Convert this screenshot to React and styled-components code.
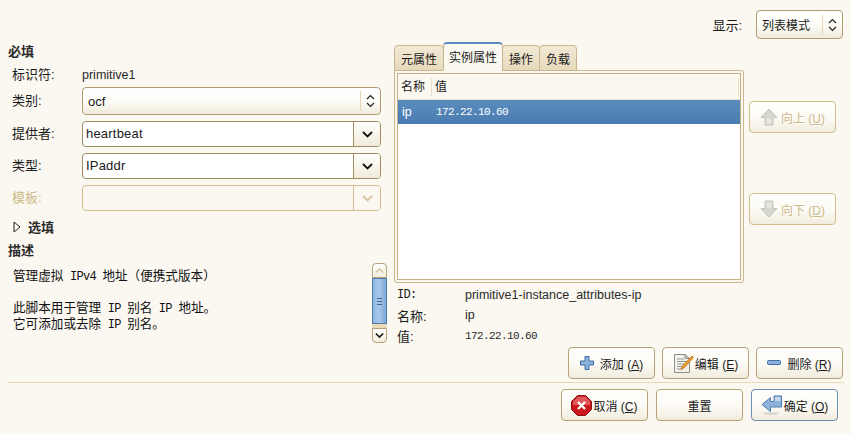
import React from 'react';
import styled, { createGlobalStyle } from 'styled-components';

const FONT = '"Liberation Sans", "Noto Sans CJK SC", sans-serif';
const MONO = '"Liberation Mono", "Noto Sans CJK SC", monospace';

const GlobalStyle = createGlobalStyle`
  html, body { margin: 0; padding: 0; background: #fbf8f1; }
  body { font-family: ${FONT}; font-size: 12px; color: #1a1a1a; }
`;

const Page = styled.div`
  width: 851px;
  height: 434px;
  box-sizing: border-box;
  padding: 10px 8px 0;
  overflow: hidden;
  background: #fbf8f1;
`;

const TopBar = styled.div`
  display: flex;
  justify-content: flex-end;
  align-items: center;
  gap: 14px;
  height: 29px;
  margin-bottom: 3px;
`;

const TopLabel = styled.span`
  font-size: 13px;
`;

const Main = styled.div`
  display: flex;
  gap: 7px;
`;

const LeftColumn = styled.div`
  width: 379px;
  padding-top: 3px;
`;

const Heading = styled.div`
  font-weight: 700;
  font-size: 13px;
  line-height: 14px;
  color: #2a2a2a;
`;

const FieldGrid = styled.div`
  display: grid;
  grid-template-columns: 70px 299px;
  row-gap: 6px;
  padding: 10px 6px 0 4px;
  align-items: center;
`;

const FieldLabel = styled.div`
  font-size: 13px;
  line-height: 12px;
  color: ${(p) => (p.$disabled ? '#cdb888' : '#1a1a1a')};
`;

const PlainValue = styled.div`
  font-size: 12.5px;
  line-height: 12px;
  color: #2a2a2a;
`;

const ComboBox = styled.div`
  display: flex;
  align-items: center;
  box-sizing: border-box;
  width: ${(p) => p.$width || '299px'};
  height: ${(p) => p.$height || '28px'};
  border: 1px solid #b09c70;
  border-radius: 4px;
  background: linear-gradient(#ffffff 0%, #fdfcf8 50%, #f0ebdb 100%);
`;

const ComboText = styled.span`
  flex: 1;
  padding-left: 5px;
  font-size: ${(p) => p.$size || '13px'};
`;

const ComboDivider = styled.span`
  width: 1px;
  height: 20px;
  background: #e6d6b2;
`;

const ComboArrow = styled.span`
  display: flex;
  justify-content: center;
  width: 19px;
`;

const EntryBox = styled.div`
  display: flex;
  box-sizing: border-box;
  width: 299px;
  height: 26px;
  border: 1px solid ${(p) => (p.$disabled ? '#d2bd8c' : '#a08c60')};
  border-radius: 4px;
  overflow: hidden;
  background: ${(p) => (p.$disabled ? '#fbf8f1' : '#fff')};
`;

const EntryText = styled.span`
  flex: 1;
  padding-left: 3px;
  font-size: 13px;
  letter-spacing: 0.2px;
  line-height: 24px;
  color: #1a1a1a;
`;

const EntryButton = styled.span`
  display: flex;
  align-items: center;
  justify-content: center;
  width: 26px;
  border-left: 1px solid ${(p) => (p.$disabled ? '#d2bd8c' : '#a08c60')};
  background: ${(p) => (p.$disabled ? '#fbf8f1' : 'linear-gradient(#fffefb, #f0ebdb)')};
`;

const Expander = styled.div`
  display: flex;
  align-items: center;
  gap: 7px;
  height: 13px;
  margin: 9px 0 11px 5px;
  font-weight: 700;
  font-size: 13px;
  color: #2a2a2a;
`;

const DescRow = styled.div`
  display: flex;
  justify-content: space-between;
  height: 80px;
  margin-top: 5px;
`;

const DescText = styled.div`
  padding: 5px 0 0 5px;
`;

const DescLine = styled.div`
  height: 16px;
  font-family: ${FONT};
  font-size: 12.6px;
  line-height: 16px;
  white-space: pre;
  color: #111;
`;

const Latin = styled.span`
  font-family: "Liberation Mono", monospace;
  font-size: 12px;
  letter-spacing: -0.7px;
`;

const ScrollBar = styled.div`
  display: flex;
  flex-direction: column;
  width: 15px;
  height: 80px;
`;

const ScrollStep = styled.div`
  display: flex;
  align-items: center;
  justify-content: center;
  box-sizing: border-box;
  height: 15px;
  border: 1px solid #b5a278;
  border-radius: ${(p) => (p.$down ? '0 0 4px 4px' : '4px 4px 0 0')};
  background: linear-gradient(#fff, #f1ecdd);
`;

const ScrollTrack = styled.div`
  flex: 1;
  display: flex;
  flex-direction: column;
  background: #e9d9b4;
`;

const ScrollThumb = styled.div`
  display: flex;
  align-items: center;
  justify-content: center;
  box-sizing: border-box;
  height: 46px;
  border: 1px solid #4f7cae;
  background: linear-gradient(90deg, #8fb6e2, #a9c8ea 45%, #7ea7d6);
`;

const RightColumn = styled.div`
  width: 449px;
`;

const RightTop = styled.div`
  display: flex;
  gap: 5px;
`;

const TabColumn = styled.div`
  width: 350px;
`;

const TabStrip = styled.div`
  display: flex;
  align-items: flex-end;
  height: 29px;
  margin-bottom: -1px;
  position: relative;
  z-index: 1;
`;

const Tab = styled.div`
  box-sizing: border-box;
  height: ${(p) => (p.$active ? '29px' : '26px')};
  padding: ${(p) => (p.$active ? '4px 5px 0' : '4px 6px 0')};
  font-size: 12px;
  line-height: 20px;
  white-space: nowrap;
  border: 1px solid #c9b68c;
  border-radius: 4px 4px 0 0;
  background: ${(p) => (p.$active ? '#fbf8f1' : 'linear-gradient(#f3ead6, #e6d9bb)')};
  border-top-color: ${(p) => (p.$active ? '#5b8cc0' : '#c9b68c')};
  border-top-width: ${(p) => (p.$active ? '2px' : '1px')};
  border-bottom: ${(p) => (p.$active ? '1px solid #fbf8f1' : '1px solid #c9b68c')};

  & + & {
    margin-left: -1px;
  }
`;

const Notebook = styled.div`
  box-sizing: border-box;
  height: 213px;
  padding: 2px;
  border: 1px solid #c9b68c;
  border-radius: 0 3px 3px 3px;
`;

const ListBox = styled.div`
  box-sizing: border-box;
  height: 100%;
  border: 1px solid #c4b084;
  background: #fff;
`;

const ListHeader = styled.div`
  display: flex;
  align-items: center;
  height: 26px;
  box-sizing: border-box;
  border-bottom: 1px solid #e9dfc8;
  background: #fbf8f1;
`;

const HeaderCell = styled.div`
  box-sizing: border-box;
  width: ${(p) => p.$width};
  height: 18px;
  padding-left: 3px;
  font-size: 12px;
  line-height: 18px;
  border-right: 1px solid #eadfc6;
`;

const SelectedRow = styled.div`
  display: flex;
  align-items: center;
  height: 24px;
  background: linear-gradient(#5a8cc0, #4a7cb0);
  color: #fff;
`;

const RowName = styled.span`
  width: 34px;
  padding-left: 4px;
  font-size: 12.5px;
`;

const MonoValue = styled.span`
  font-family: ${MONO};
  font-size: 11px;
  letter-spacing: -0.6px;
  line-height: 12px;
`;

const SideButtons = styled.div`
  display: flex;
  flex-direction: column;
  gap: 60px;
  padding-top: 59px;
`;

const Button = styled.div`
  display: flex;
  align-items: center;
  justify-content: center;
  gap: ${(p) => p.$gap || '3px'};
  box-sizing: border-box;
  width: 87px;
  height: 32px;
  font-size: 12px;
  white-space: nowrap;
  border: 1px solid ${(p) => (p.$default ? '#6b8db4' : p.$disabled ? '#d2bd8c' : '#b5a278')};
  border-radius: 4px;
  background: linear-gradient(#fffefc 0%, #fdfbf6 50%, #f1ecdd 100%);
  color: ${(p) => (p.$disabled ? '#cdb888' : '#1a1a1a')};
  text-shadow: ${(p) => (p.$disabled ? '1px 1px 0 #fff' : 'none')};

  u {
    text-underline-offset: 1px;
  }
`;

const InfoGrid = styled.div`
  display: grid;
  grid-template-columns: 68px 1fr;
  grid-auto-rows: 20px;
  align-items: center;
  padding: 2px 0 0 3px;
`;

const InfoLabel = styled.div`
  font-size: ${(p) => (p.$mono ? '12px' : '13px')};
  letter-spacing: ${(p) => (p.$mono ? '-0.7px' : '0')};
  font-family: ${(p) => (p.$mono ? MONO : FONT)};
`;

const InfoValue = styled.div`
  font-size: 12.5px;
  color: #2a2a2a;
`;

const ActionRow = styled.div`
  display: flex;
  justify-content: flex-end;
  gap: 7px;
  margin-top: 2px;
`;

const Separator = styled.div`
  height: 1px;
  margin: 3px -1px 6px -1px;
  background: #e8d8b6;
`;

const FooterRow = styled.div`
  display: flex;
  justify-content: flex-end;
  gap: 8px;
  padding-right: 5px;
`;

const UpDownArrows = () => (
  <svg width="11" height="16" viewBox="0 0 11 16" fill="none" stroke="#222" strokeWidth="1.2">
    <path d="M2 6 L5.5 2.5 L9 6" />
    <path d="M2 10 L5.5 13.5 L9 10" />
  </svg>
);

const Chevron = ({ color = '#111', width = 11, up }) => (
  <svg width={width} height="7" viewBox="0 0 11 7" fill="none" stroke={color} strokeWidth="1.8">
    <path d={up ? 'M1 6 L5.5 1.5 L10 6' : 'M1 1 L5.5 5.5 L10 1'} />
  </svg>
);

const TriangleRight = () => (
  <svg width="8" height="12" viewBox="0 0 8 12" fill="#fbf8f1" stroke="#222" strokeWidth="1">
    <path d="M1 1 L7 6 L1 11 Z" />
  </svg>
);

const GripLines = () => (
  <svg width="7" height="8" viewBox="0 0 7 8" stroke="#3f6796" strokeWidth="1">
    <path d="M1 1.5 H6 M1 4.5 H6 M1 7.5 H6" />
  </svg>
);

const UpArrowIcon = () => (
  <svg width="18" height="18" viewBox="0 0 18 18">
    <path d="M9 1 L17 9.5 H13 V17 H5 V9.5 H1 Z" fill="#d6d8cf" stroke="#c4c6bc" />
    <path d="M6.5 10 V16 H11.5 V10" fill="#e4e5dd" />
  </svg>
);

const DownArrowIcon = () => (
  <svg width="18" height="18" viewBox="0 0 18 18">
    <path d="M5 1 H13 V8.5 H17 L9 17 L1 8.5 H5 Z" fill="#d6d8cf" stroke="#c4c6bc" />
    <path d="M6.5 2 V8 H11.5 V2" fill="#e4e5dd" />
  </svg>
);

const PlusIcon = () => (
  <svg width="14" height="14" viewBox="0 0 14 14">
    <path d="M5 .5 H9 V5 H13.5 V9 H9 V13.5 H5 V9 H.5 V5 H5 Z" fill="#8db1dc" stroke="#3e6ea6" />
  </svg>
);

const MinusIcon = () => (
  <svg width="14" height="6" viewBox="0 0 14 6">
    <rect x=".5" y=".5" width="13" height="4" rx="1" fill="#8db1dc" stroke="#3e6ea6" />
  </svg>
);

const EditIcon = () => (
  <svg width="21" height="22" viewBox="0 0 21 22">
    <path d="M1.5 2.5 H12 L16.5 6.5 V20.5 H1.5 Z" fill="#f2f1ec" stroke="#8f8f88" />
    <path d="M12 2.5 V6.5 H16.5 Z" fill="#d5d4cc" stroke="#8f8f88" />
    <path d="M4 7 H11 M4 9.5 H14 M4 12 H11 M4 14.5 H9 M4 17 H8" stroke="#9a9a92" strokeWidth="1" />
    <path d="M19 4 L20.5 5.5 L11 16 L8 17.5 L9 14.5 Z" fill="#f0a030" stroke="#b86c10" strokeWidth=".8" />
  </svg>
);

const StopIcon = () => (
  <svg width="21" height="21" viewBox="0 0 21 21">
    <path d="M6.5 .5 H14.5 L20.5 6.5 V14.5 L14.5 20.5 H6.5 L.5 14.5 V6.5 Z" fill="#c9161c" stroke="#8e1014" />
    <path d="M6.8 1.8 H14.2 L19 6.6 V10 H2 V6.6 Z" fill="#e0585a" />
    <path d="M7 7 L14 14 M14 7 L7 14" stroke="#fff" strokeWidth="2.4" />
  </svg>
);

const ReturnIcon = () => (
  <svg width="22" height="21" viewBox="0 0 22 21">
    <ellipse cx="10" cy="18.5" rx="8" ry="1.6" fill="#dcdad2" />
    <path d="M13 1 H20.5 V12 H9.5 V16.5 L1 9.5 L9.5 2.5 V6.5 H13 Z" fill="#8fb2da" stroke="#4f7cae" />
    <path d="M14 2 H19.5 V6 H14 Z" fill="#c5d8ee" />
  </svg>
);

const Mnemonic = ({ label, k }) => (
  <span>
    {label} (<u>{k}</u>)
  </span>
);

export default function App() {
  return (
    <Page>
      <GlobalStyle />
      <TopBar>
        <TopLabel>显示:</TopLabel>
        <ComboBox $width="87px" $height="29px">
          <ComboText $size="12px">列表模式</ComboText>
          <ComboDivider />
          <ComboArrow><UpDownArrows /></ComboArrow>
        </ComboBox>
      </TopBar>

      <Main>
        <LeftColumn>
          <Heading>必填</Heading>
          <FieldGrid>
            <FieldLabel>标识符:</FieldLabel>
            <PlainValue>primitive1</PlainValue>
            <FieldLabel>类别:</FieldLabel>
            <ComboBox>
              <ComboText>ocf</ComboText>
              <ComboDivider />
              <ComboArrow><UpDownArrows /></ComboArrow>
            </ComboBox>
            <FieldLabel>提供者:</FieldLabel>
            <EntryBox>
              <EntryText>heartbeat</EntryText>
              <EntryButton><Chevron /></EntryButton>
            </EntryBox>
            <FieldLabel>类型:</FieldLabel>
            <EntryBox>
              <EntryText>IPaddr</EntryText>
              <EntryButton><Chevron /></EntryButton>
            </EntryBox>
            <FieldLabel $disabled>模板:</FieldLabel>
            <EntryBox $disabled>
              <EntryText />
              <EntryButton $disabled><Chevron color="#d8c69c" /></EntryButton>
            </EntryBox>
          </FieldGrid>
          <Expander>
            <TriangleRight />
            选填
          </Expander>
          <Heading>描述</Heading>
          <DescRow>
            <DescText>
              <DescLine>管理虚拟<Latin> IPv4 </Latin>地址（便携式版本）</DescLine>
              <DescLine />
              <DescLine>此脚本用于管理<Latin> IP </Latin>别名<Latin> IP </Latin>地址。</DescLine>
              <DescLine>它可添加或去除<Latin> IP </Latin>别名。</DescLine>
            </DescText>
            <ScrollBar>
              <ScrollStep><Chevron color="#d8c69c" width={9} up /></ScrollStep>
              <ScrollTrack>
                <ScrollThumb><GripLines /></ScrollThumb>
              </ScrollTrack>
              <ScrollStep $down><Chevron width={9} /></ScrollStep>
            </ScrollBar>
          </DescRow>
        </LeftColumn>

        <RightColumn>
          <RightTop>
            <TabColumn>
              <TabStrip>
                <Tab>元属性</Tab>
                <Tab $active>实例属性</Tab>
                <Tab>操作</Tab>
                <Tab>负载</Tab>
              </TabStrip>
              <Notebook>
                <ListBox>
                  <ListHeader>
                    <HeaderCell $width="34px">名称</HeaderCell>
                    <HeaderCell $width="307px">值</HeaderCell>
                  </ListHeader>
                  <SelectedRow>
                    <RowName>ip</RowName>
                    <MonoValue>172.22.10.60</MonoValue>
                  </SelectedRow>
                </ListBox>
              </Notebook>
            </TabColumn>
            <SideButtons>
              <Button $disabled>
                <UpArrowIcon />
                <Mnemonic label="向上" k="U" />
              </Button>
              <Button $disabled>
                <DownArrowIcon />
                <Mnemonic label="向下" k="D" />
              </Button>
            </SideButtons>
          </RightTop>
          <InfoGrid>
            <InfoLabel $mono>ID:</InfoLabel>
            <InfoValue>primitive1-instance_attributes-ip</InfoValue>
            <InfoLabel>名称:</InfoLabel>
            <InfoValue>ip</InfoValue>
            <InfoLabel>值:</InfoLabel>
            <InfoValue><MonoValue>172.22.10.60</MonoValue></InfoValue>
          </InfoGrid>
        </RightColumn>
      </Main>

      <ActionRow>
        <Button $gap="6px"><PlusIcon /><Mnemonic label="添加" k="A" /></Button>
        <Button $gap="1px"><EditIcon /><Mnemonic label="编辑" k="E" /></Button>
        <Button $gap="6px"><MinusIcon /><Mnemonic label="删除" k="R" /></Button>
      </ActionRow>
      <Separator />
      <FooterRow>
        <Button $gap="1px"><StopIcon /><Mnemonic label="取消" k="C" /></Button>
        <Button>重置</Button>
        <Button $default $gap="1px"><ReturnIcon /><Mnemonic label="确定" k="O" /></Button>
      </FooterRow>
    </Page>
  );
}
